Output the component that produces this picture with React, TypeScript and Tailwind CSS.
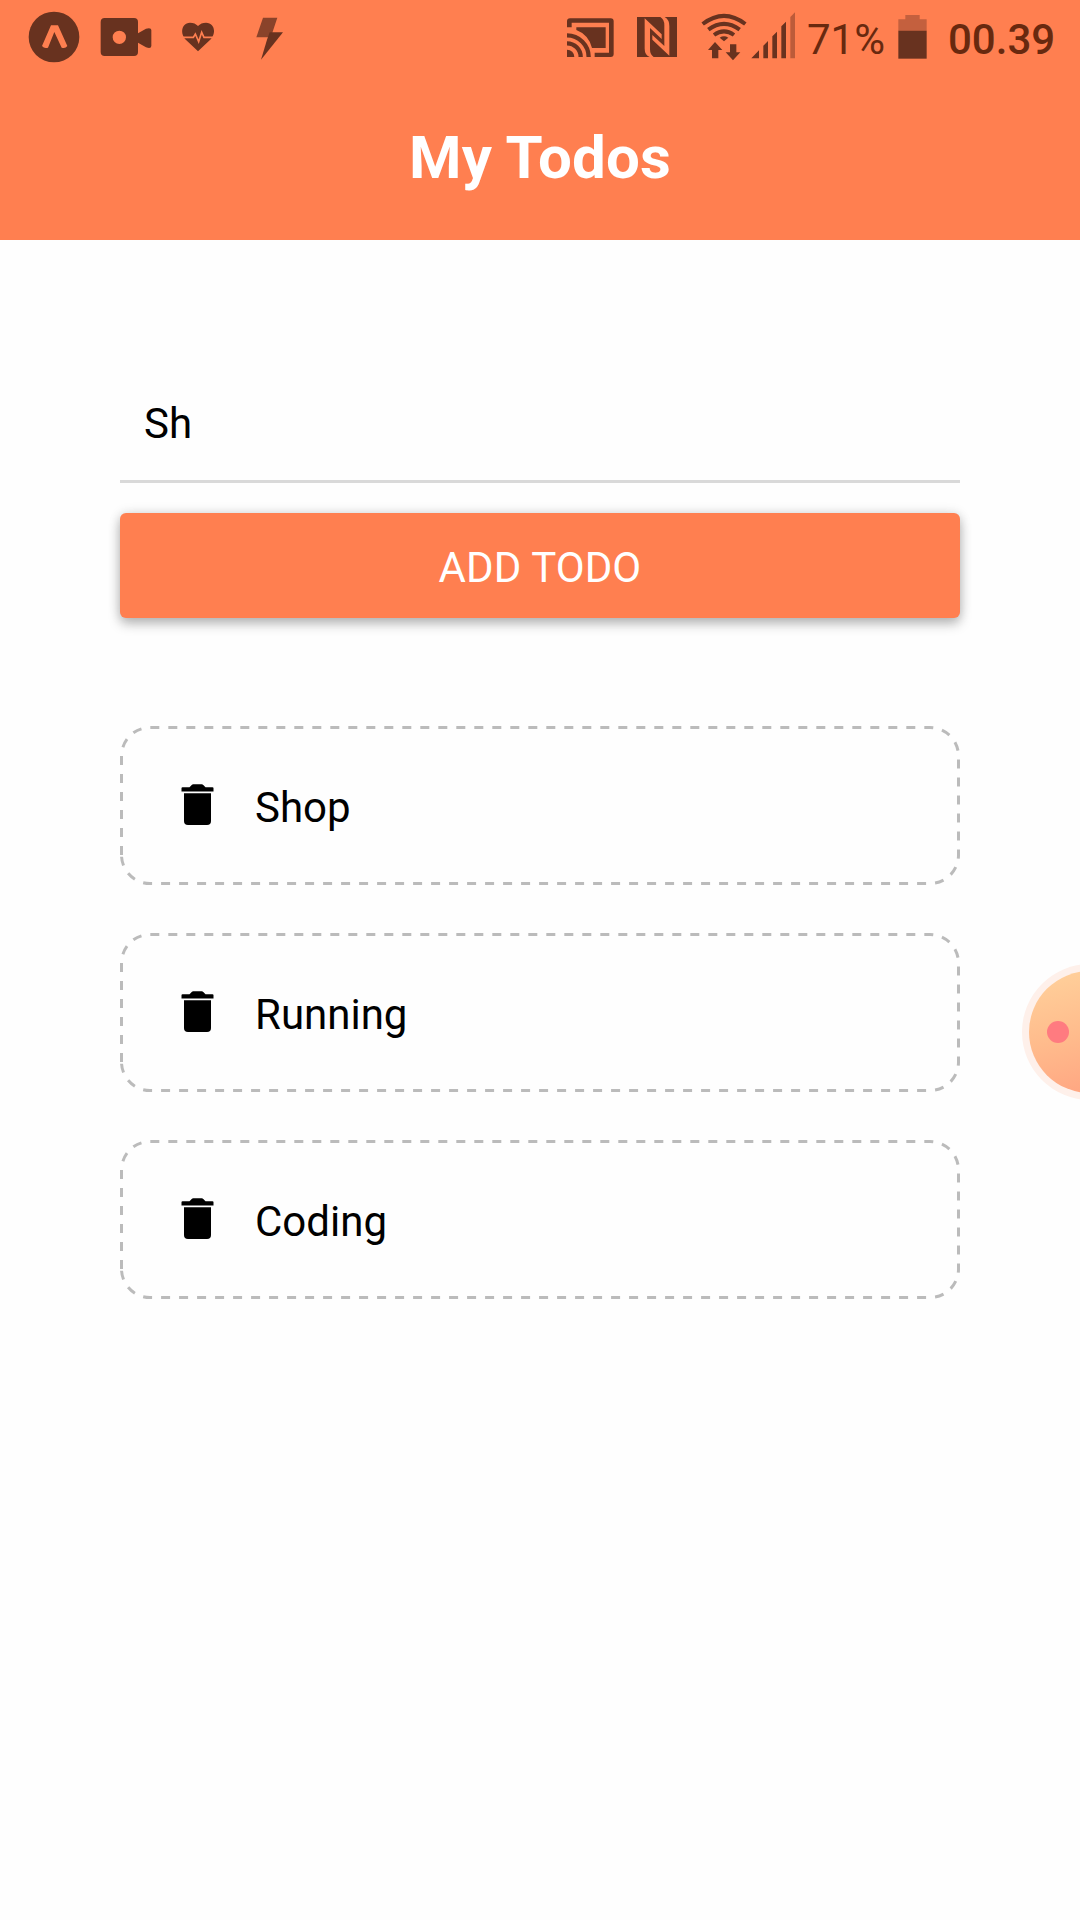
import type { ReactNode } from "react";

const todos = ["Shop", "Running", "Coding"];

function StatusIcon({ x, w, className, children }: { x: number; w: number; className: string; children: ReactNode }) {
  return (
    <svg viewBox={`${x} 0 ${w} 240`} className={`h-20 shrink-0 ${className}`} fill="#68321f">
      {children}
    </svg>
  );
}

function StatusBar() {
  return (
    <div className="flex h-20 items-start pl-7 text-[#68290f]">
      <StatusIcon x={84} w={156} className="w-[52px]">
        <circle cx="162" cy="111" r="76" />
        <path d="M153 76H174L202 138Q196 147 185 143L163 96L144 143Q133 147 126 138Z" fill="#ff7f50" />
      </StatusIcon>
      <StatusIcon x={300} w={156} className="ml-5 w-[52px]">
        <path
          fillRule="evenodd"
          d="M314 54H402Q414 54 414 66V100L438 86Q454 82 454 90V138Q454 147 438 142L414 128V156Q414 168 402 168H314Q302 168 302 156V66Q302 54 314 54ZM358 92A20 20 0 1 0 358 132A20 20 0 1 0 358 92Z"
        />
      </StatusIcon>
      <StatusIcon x={543} w={102} className="ml-[29px] w-[34px]">
        <path d="M594 154L555 117C538 96 548 68 570 68Q585 68 594 78Q603 68 618 68C642 68 650 96 633 117Z" />
        <path d="M543 112H580L586 102L596 125L605 97L612 112H645" fill="none" stroke="#ff7f50" strokeWidth="5" />
      </StatusIcon>
      <StatusIcon x={768} w={84} className="ml-[41px] w-7">
        <path d="M789 53H832L817 98L806 112L769 112Z" fill="#8a432a" />
        <path d="M809 97H849L783 179L801 119Z" />
      </StatusIcon>

      <StatusIcon x={51} w={141} className="ml-[283px] w-[47px]">
        <path d="M51 82V64Q51 55 60 55H182Q191 55 191 64V162Q191 171 182 171H134V158H177V68H65V82Z" />
        <path d="M79 82H167V144H126Q116 104 79 90Z" />
        <path d="M51 149A22 22 0 0 1 73 171H51Z" />
        <path d="M51 130A41 41 0 0 1 92 171M51 106A65 65 0 0 1 116 171" fill="none" stroke="#68321f" strokeWidth="13" />
      </StatusIcon>
      <StatusIcon x={261} w={120} className="ml-[23px] w-10">
        <path d="M261 51H381V171H261Z" />
        <path d="M284 55L335 103V117L300 84V148Q300 164 311 171H299Q284 164 284 146Z" fill="#ff7f50" />
        <path d="M358 167L307 119V105L343 138V76Q343 58 331 51H344Q358 59 358 78Z" fill="#ff7f50" />
      </StatusIcon>
      <StatusIcon x={453} w={138} className="ml-6 w-[46px]">
        <path
          d="M458 72Q522 23 586 72M475 89Q522 54 569 89M492 105Q522 83 552 105"
          fill="none"
          stroke="#68321f"
          strokeWidth="12"
        />
        <path d="M509 113Q522 105 535 113L522 124Z" />
        <path d="M495 126L517 150H505V175H486V150H474ZM549 181L527 157H540V133H559V157H571Z" />
      </StatusIcon>
      <StatusIcon x={603} w={135} className="ml-1 w-[45px]">
        <path d="M604 175L627 151V175ZM640 137L654 123V175H640ZM667 109L681 95V175H667ZM694 79L708 65V175H694Z" />
        <path d="M721 51L735 37V175H721Z" fill="#bd5b39" />
      </StatusIcon>
      <span className="ml-[11px] mt-[15px] w-[80px] text-[42px] leading-[49px] whitespace-nowrap">71%</span>
      <StatusIcon x={324} w={87} className="ml-[11px] w-[29px]">
        <path d="M325 58H346V45H389V58H410V92H325Z" fill="#c4603e" />
        <path d="M325 92H410V176H325Z" />
      </StatusIcon>
      <span className="ml-[21px] mt-[15px] text-[42px] font-medium leading-[49px] whitespace-nowrap">00.39</span>
    </div>
  );
}

function TrashIcon() {
  return (
    <svg viewBox="0 0 33 42" className="mb-[2px] h-[42px] w-[33px] shrink-0">
      <path d="M0.5 4.2Q0.5 3.2 1.5 3.2H8.5L10.7 0.9Q11.3 0.3 12.3 0.3H20.7Q21.7 0.3 22.3 0.9L24.5 3.2H31.5Q32.5 3.2 32.5 4.2V7.5H0.5Z" />
      <path d="M3 9.2H30V37Q30 41 26 41H7Q3 41 3 37Z" />
    </svg>
  );
}

function TodoItem({ label }: { label: string }) {
  return (
    <li className="relative flex h-[159px] items-center pl-[61px]">
      <svg viewBox="0 0 840 159" className="absolute inset-0 h-full w-full" fill="none">
        <path
          d="M1.5 129V30A28.5 28.5 0 0 1 30 1.5H810A28.5 28.5 0 0 1 838.5 30V129A28.5 28.5 0 0 1 810 157.5H30A28.5 28.5 0 0 1 1.5 129Z"
          stroke="#bbbbbb"
          strokeWidth="3"
          strokeDasharray="9 9"
        />
      </svg>
      <TrashIcon />
      <span className="mt-1 ml-[41px] text-[42px] leading-[49px]">{label}</span>
    </li>
  );
}

export default function App() {
  return (
    <div className="relative h-[1920px] w-[1080px] overflow-hidden bg-[#fefefe] font-['Roboto',sans-serif] text-black">
      <header className="h-60 bg-[#ff7f50]">
        <StatusBar />
        <h1 className="pt-[43px] text-center text-[60px] leading-[70px] font-bold tracking-[0.2px] text-white">My Todos</h1>
      </header>
      <main className="px-[120px] pt-[120px]">
        <div className="flex h-[123px] items-center border-b-[3px] border-[#d9d9d9] px-6">
          <span className="mt-[7px] text-[42px] leading-[49px]">Sh</span>
        </div>
        <button className="mt-[30px] flex h-[105px] w-full items-center justify-center rounded-md bg-[#ff7f50] pt-1 text-[42px] leading-[49px] tracking-[0.1px] text-white shadow-[0_6px_12px_rgba(0,0,0,0.25),0_0_12px_rgba(0,0,0,0.13)]">
          ADD TODO
        </button>
        <ul className="mt-[108px] flex flex-col gap-12">
          {todos.map((todo) => (
            <TodoItem key={todo} label={todo} />
          ))}
        </ul>
      </main>
      <div className="absolute top-[964px] left-[1022px] size-[136px] rounded-full bg-[#fef0ea] p-[7px]">
        <div className="flex size-full items-center rounded-full bg-[linear-gradient(165deg,#ffd29c_0%,#ffbb8c_50%,#ffa07f_100%)] pl-[18px]">
          <div className="size-[22px] rounded-full bg-[#ff7b80]" />
        </div>
      </div>
    </div>
  );
}
